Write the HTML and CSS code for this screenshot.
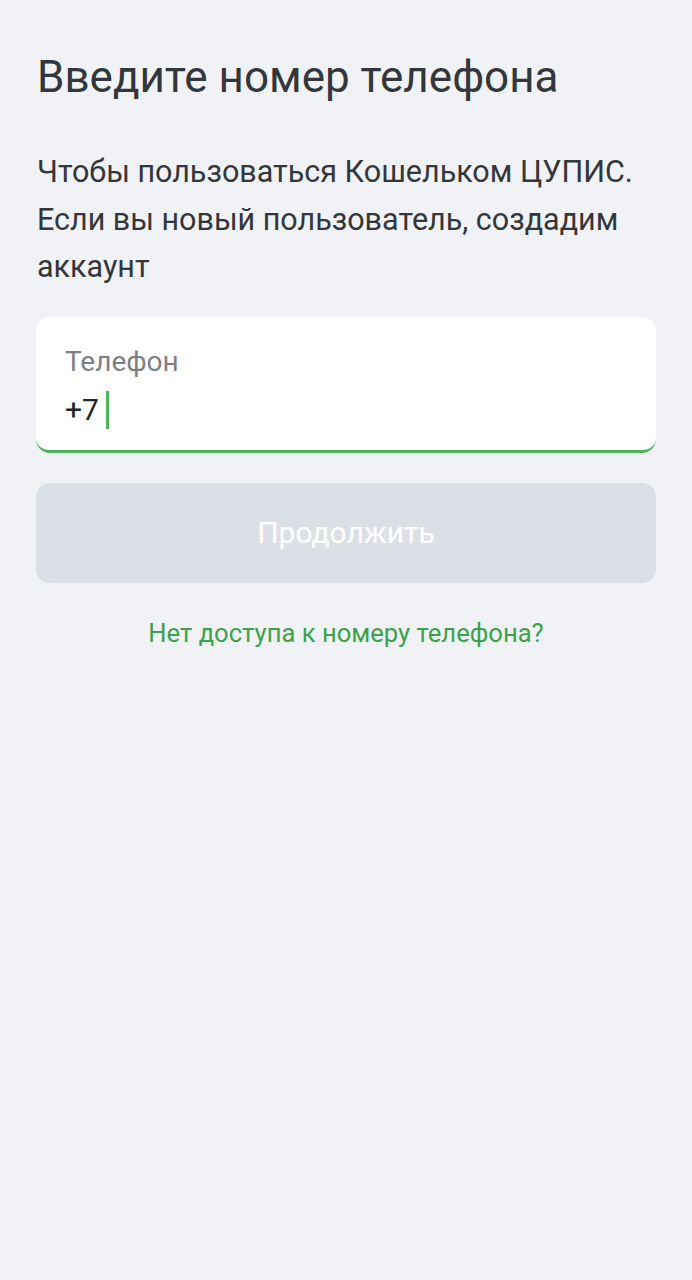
FILE: index.html
```html
<!DOCTYPE html>
<html lang="ru">
<head>
<meta charset="utf-8">
<link rel="stylesheet" href="styles.css">
</head>
<body>
<main class="page">
  <h1 class="title">Введите номер телефона</h1>
  <p class="lead">Чтобы пользоваться Кошельком ЦУПИС. Если вы новый пользователь, создадим аккаунт</p>
  <div class="field">
    <div class="field-label">Телефон</div>
    <div class="field-value"><span>+7</span><span class="cursor"></span></div>
  </div>
  <button class="btn">Продолжить</button>
  <a class="link" href="#">Нет доступа к номеру телефона?</a>
</main>
</body>
</html>
```

FILE: styles.css
```css
html, body {
  margin: 0;
  padding: 0;
  background: #f0f2f5;
}
body {
  font-family: Roboto, "Noto Sans", sans-serif;
  color: #33363a;
}
.page {
  padding: 52px 36px 0 36px;
  display: flex;
  flex-direction: column;
}
.title {
  margin: 0;
  font-size: 44px;
  font-weight: 400;
  line-height: 50px;
  color: #33363a;
  padding-left: 1px;
}
.lead {
  margin: 46px 0 0 0;
  font-size: 30.5px;
  line-height: 47.5px;
  color: #33363a;
  padding-left: 1px;
}
.field {
  margin-top: 26px;
  background: #fff;
  border-radius: 14px;
  border-bottom: 3px solid #4cb55a;
  padding: 30px 29px 22px 29px;
  height: 81px;
}
.field-label {
  font-size: 28px;
  line-height: 30px;
  color: #7c8086;
}
.field-value {
  margin-top: 14px;
  display: flex;
  align-items: center;
  font-size: 30px;
  line-height: 38px;
  color: #222426;
}
.cursor {
  display: inline-block;
  width: 3px;
  height: 38px;
  background: #4cb55a;
  margin-left: 7px;
}
.btn {
  margin-top: 30px;
  height: 100px;
  border: none;
  border-radius: 14px;
  background: #dbdfe6;
  color: #fff;
  font-family: Roboto, "Noto Sans", sans-serif;
  font-size: 30px;
  padding: 0;
}
.link {
  margin-top: 35px;
  align-self: center;
  font-size: 25.6px;
  line-height: 30px;
  color: #3ba24a;
  text-decoration: none;
}
```
